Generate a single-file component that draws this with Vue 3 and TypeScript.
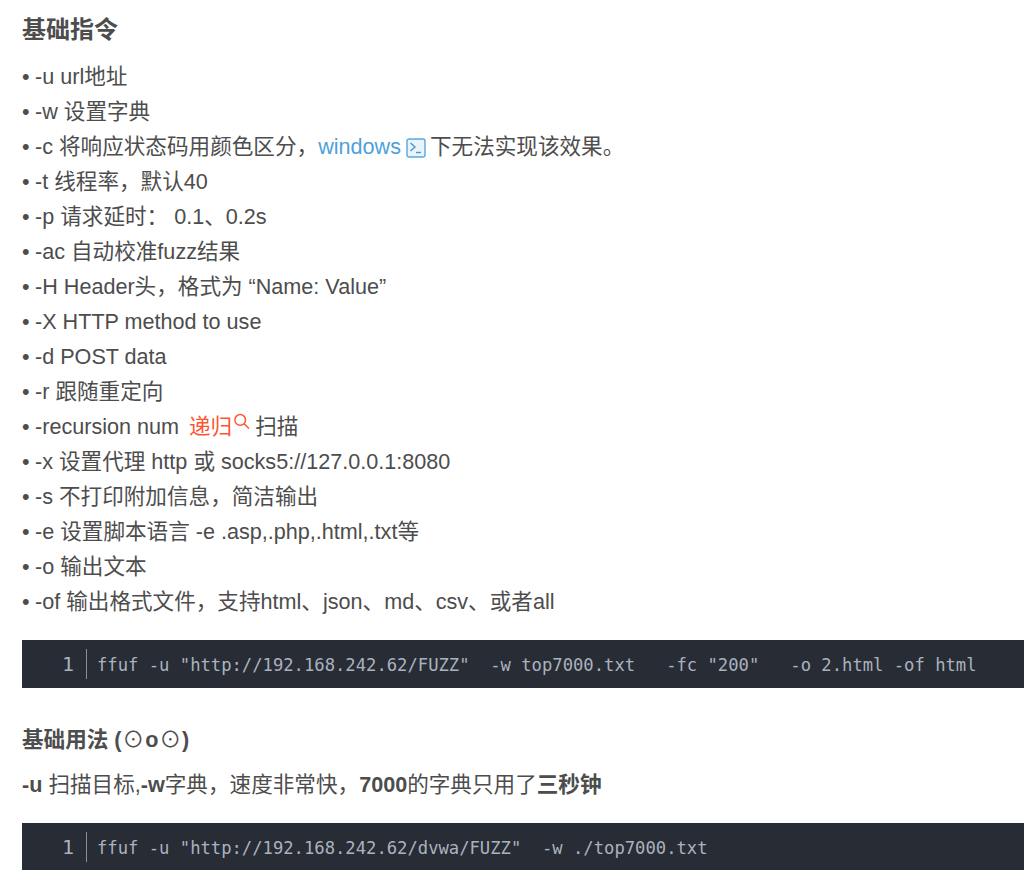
<script setup lang="ts">
const before: string[] = ['-u url地址', '-w 设置字典']
const after: string[] = [
  '-t 线程率，默认40',
  '-p 请求延时： 0.1、0.2s',
  '-ac 自动校准fuzz结果',
  '-H Header头，格式为 “Name: Value”',
  '-X HTTP method to use',
  '-d POST data',
  '-r 跟随重定向',
]
const tail: string[] = [
  '-x 设置代理 http 或 socks5://127.0.0.1:8080',
  '-s 不打印附加信息，简洁输出',
  '-e 设置脚本语言 -e .asp,.php,.html,.txt等',
  '-o 输出文本',
  '-of 输出格式文件，支持html、json、md、csv、或者all',
]
</script>

<template>
  <main class="article">
    <h2 class="h-main">基础指令</h2>
    <ul class="opts">
      <li v-for="t in before" :key="t">{{ t }}</li>
      <li>-c 将响应状态码用颜色区分，<span class="link">windows</span><svg class="term" viewBox="0 0 20 20" width="20" height="20" aria-hidden="true"><rect x="1" y="1" width="18" height="18" rx="2" fill="#e8f3fb" stroke="#5aa7e0" stroke-width="1.4"/><path d="M4.5 5 L9 9 L4.5 13" fill="none" stroke="#4d94cc" stroke-width="1.4"/><path d="M10 14.5 H15" stroke="#4d94cc" stroke-width="1.4"/></svg>下无法实现该效果。</li>
      <li v-for="t in after" :key="t">{{ t }}</li>
      <li>-recursion num<span class="hot">递归<svg class="search" viewBox="0 0 16 16" width="17" height="17" aria-hidden="true"><circle cx="6.8" cy="6.5" r="5" fill="none" stroke="#fc5531" stroke-width="1.4"/><path d="M10.5 10.2 L15 14.6" stroke="#fc5531" stroke-width="1.4"/></svg></span>扫描</li>
      <li v-for="t in tail" :key="t">{{ t }}</li>
    </ul>
    <pre class="code"><span class="ln">1</span><code>ffuf -u "http://192.168.242.62/FUZZ"  -w top7000.txt   -fc "200"   -o 2.html -of html</code></pre>
    <h3 class="h-sub">基础用法 (<span class="eye">⊙</span>o<span class="eye">⊙</span>)</h3>
    <p class="para"><b>-u</b> 扫描目标,<b>-w</b>字典，速度非常快，<b>7000</b>的字典只用了<b>三秒钟</b></p>
    <pre class="code"><span class="ln">1</span><code>ffuf -u "http://192.168.242.62/dvwa/FUZZ"  -w ./top7000.txt</code></pre>
  </main>
</template>

<style>
html, body { margin: 0; background: #fff; overflow: hidden; }
</style>

<style scoped>
.article {
  height: 870px;
  overflow: hidden;
  padding: 13px 0 0 22px;
  box-sizing: border-box;
  color: #4d4d4d;
  font-family: "Liberation Sans", "Noto Sans CJK SC", sans-serif;
  font-size: 21.6px;
}
.h-main {
  margin: 0 0 12px;
  font-size: 24px;
  line-height: 34px;
  font-weight: 700;
}
.opts { list-style: none; margin: 0 0 21px; padding: 0; }
.opts li { height: 35px; line-height: 35px; white-space: pre; display: block; }
.opts li::before { content: "•"; display: inline-block; width: 13px; }
.link { color: #4ea1db; }
.term { vertical-align: -4px; margin: 0 4px 0 5px; }
.hot { color: #fc5531; margin-left: 10px; }
.search { vertical-align: 4px; margin: 0 5px 0 1px; }
.code {
  display: flex;
  align-items: center;
  height: 48px;
  margin: 0;
  background: #282c34;
  color: #abb2bf;
  font-family: "DejaVu Sans Mono", "Liberation Mono", monospace;
  font-size: 17.2px;
  white-space: pre;
  overflow: hidden;
}
.code code { padding-top: 2px; }
.ln {
  width: 52px;
  flex: none;
  text-align: right;
  padding-right: 12px;
  margin-right: 10px;
  box-sizing: content-box;
  line-height: 30px;
  border-right: 1px solid #8a8f98;
  color: #abb2bf;
  font-size: 20px;
}
.h-sub {
  margin: 25px 0 0;
  font-size: 21.6px;
  line-height: 54px;
  height: 54px;
  font-weight: 700;
}
.eye {
  font-family: "Noto Sans CJK SC", sans-serif;
  font-weight: 400;
  line-height: 0;
  margin: 0 1px;
}
.para {
  margin: 0 0 20px;
  line-height: 36px;
  height: 36px;
  white-space: pre;
}
</style>
